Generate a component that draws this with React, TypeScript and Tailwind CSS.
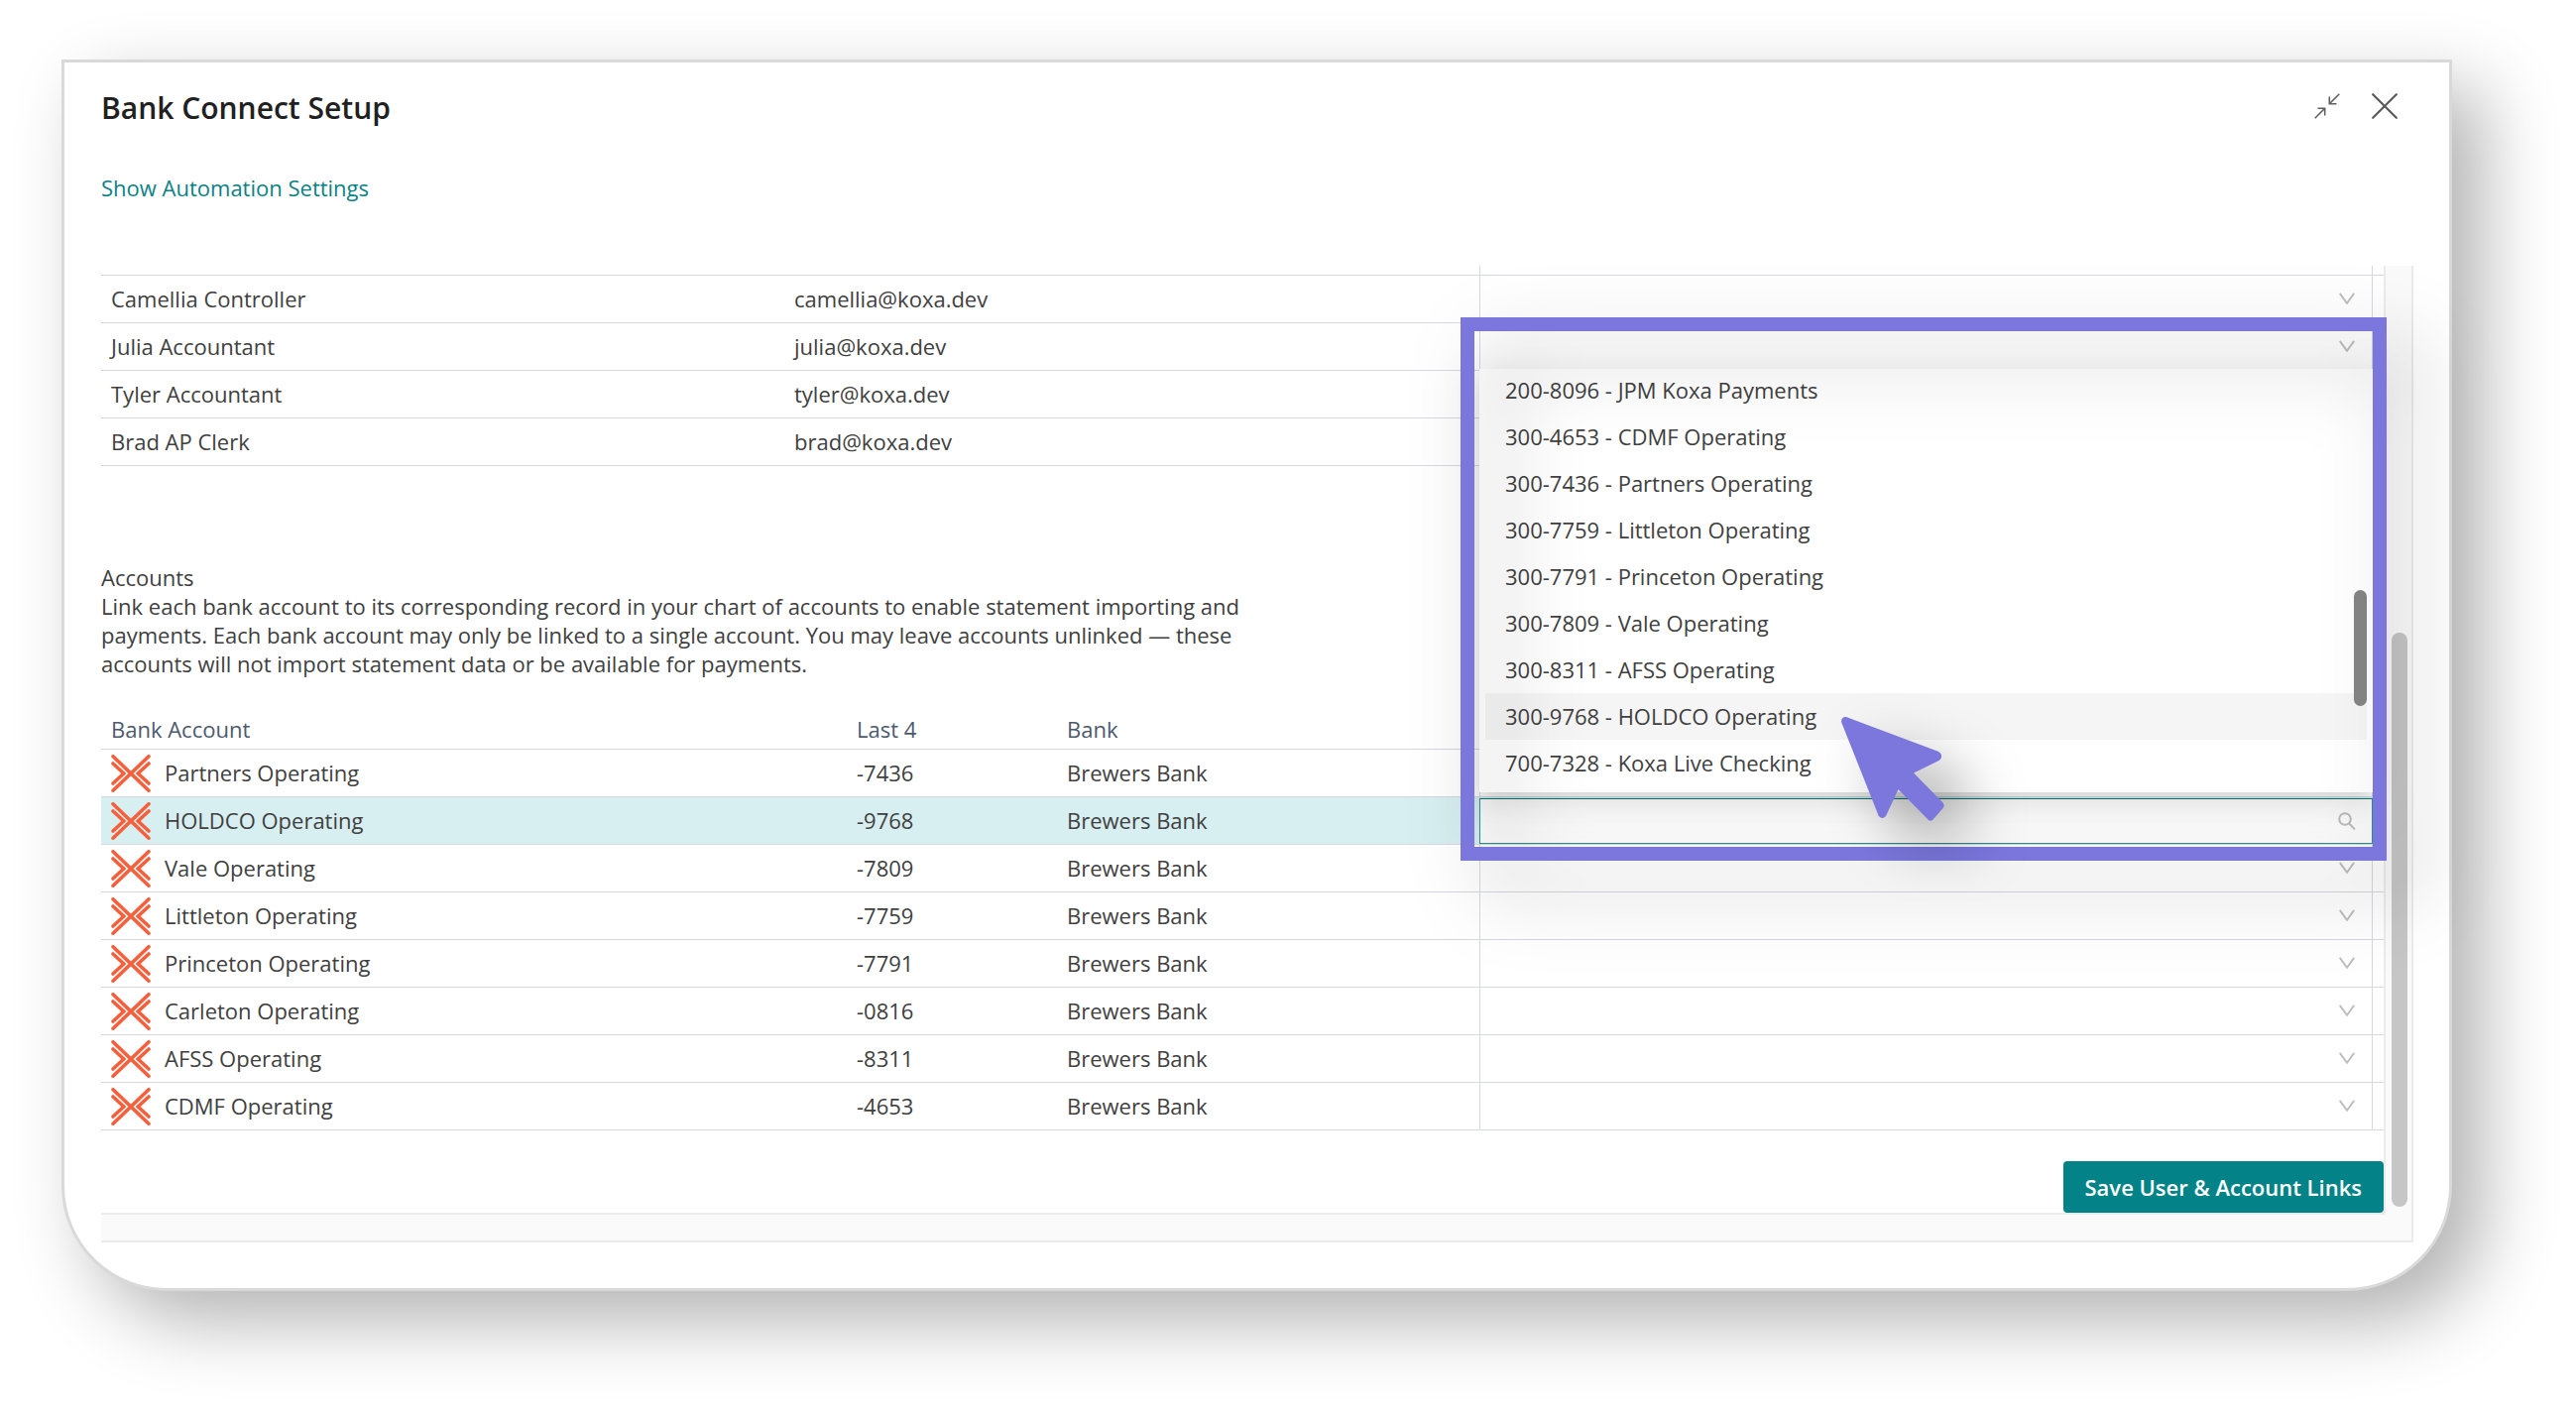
import clsx from 'clsx';

const users = [
    { name: 'Camellia Controller', email: 'camellia@koxa.dev' },
    { name: 'Julia Accountant', email: 'julia@koxa.dev' },
    { name: 'Tyler Accountant', email: 'tyler@koxa.dev' },
    { name: 'Brad AP Clerk', email: 'brad@koxa.dev' },
];

const accounts = [
    { name: 'Partners Operating', last4: '-7436' },
    { name: 'HOLDCO Operating', last4: '-9768' },
    { name: 'Vale Operating', last4: '-7809' },
    { name: 'Littleton Operating', last4: '-7759' },
    { name: 'Princeton Operating', last4: '-7791' },
    { name: 'Carleton Operating', last4: '-0816' },
    { name: 'AFSS Operating', last4: '-8311' },
    { name: 'CDMF Operating', last4: '-4653' },
];

const options = [
    '200-8096 - JPM Koxa Payments',
    '300-4653 - CDMF Operating',
    '300-7436 - Partners Operating',
    '300-7759 - Littleton Operating',
    '300-7791 - Princeton Operating',
    '300-7809 - Vale Operating',
    '300-8311 - AFSS Operating',
    '300-9768 - HOLDCO Operating',
    '700-7328 - Koxa Live Checking',
];

const activeAccount = 'HOLDCO Operating';
const hoveredOption = '300-9768 - HOLDCO Operating';

const cell = 'h-12 border-b border-[#d5d8dc] p-0';

function BankLogo() {
    return (
        <svg viewBox="0 0 40 38" className="h-[38px] w-10 shrink-0" fill="none" stroke="#f55f3b" strokeWidth="3.6" strokeLinecap="round" aria-hidden="true">
            <path d="M2 1.8 38 36.2M38 1.8 2 36.2" />
            <path d="M2 9 12.8 19 2 29M38 9 27.2 19 38 29" />
        </svg>
    );
}

function SelectBox({ label }: { label: string }) {
    return (
        <div className="relative h-full">
            <select aria-label={label} className="block h-full w-full appearance-none bg-transparent px-4 outline-none" defaultValue="">
                <option value=""></option>
                {options.map((option) => <option key={option}>{option}</option>)}
            </select>
            <svg viewBox="0 0 16 12" className="pointer-events-none absolute top-[17px] right-[17px] h-3 w-4" fill="none" stroke="#bfbfbf" strokeWidth="2" aria-hidden="true">
                <path d="M.8.8 8 10.8 15.2.8" />
            </svg>
        </div>
    );
}

function AccountPicker() {
    return (
        <>
            <div className="absolute -inset-x-px top-px bottom-0 border border-[#2c9699] border-t-[#0a7d80] bg-white">
                <input aria-label="Search accounts" aria-expanded="true" role="combobox" className="block h-full w-full bg-transparent px-4 outline-none" />
                <svg viewBox="0 0 18 18" className="pointer-events-none absolute top-[13px] right-4 h-[18px] w-[18px]" fill="none" stroke="#bfbfbf" strokeWidth="2" aria-hidden="true">
                    <circle cx="7" cy="7" r="5.8" />
                    <path d="M11 11.2 17 17.4" />
                </svg>
            </div>

            <div className="absolute -inset-x-px bottom-[52px] z-10 h-[427px] bg-white shadow-[0_5px_10px_-7px_rgba(0,0,0,0.12),0_10px_26px_0_rgba(0,0,0,0.08),0_15px_46px_13px_rgba(0,0,0,0.05)]">
                <ul role="listbox" className="flex h-full flex-col justify-end overflow-hidden px-[6px] pb-[6px]">
                    {options.map((option) => (
                        <li
                            key={option}
                            role="option"
                            aria-selected={option === hoveredOption}
                            className={clsx('h-[47px] shrink-0 px-5 leading-[47px]', option === hoveredOption && 'bg-[#f5f5f5]')}
                        >
                            {option}
                        </li>
                    ))}
                </ul>
                <div className="absolute right-[6px] bottom-[87px] h-[117px] w-[13px] rounded-full bg-[#868686]" />
            </div>

            {/* highlight frame round the open picker */}
            <div className="pointer-events-none absolute -top-[484px] -right-[15px] -bottom-[17px] -left-[20px] z-20 border-[14px] border-[#7b77dd] drop-shadow-[30px_30px_37px_rgba(0,0,0,0.3)]" />

            <svg viewBox="0 0 108 108" className="pointer-events-none absolute -top-[83px] left-[362px] z-30 h-[108px] w-[108px] overflow-visible drop-shadow-[30px_30px_30px_rgba(0,0,0,0.35)]" fill="#7b77dd" aria-hidden="true">
                <path d="M2.4 8C1.2 4 4 .8 8.2 2.4L99 36.5C104 38.5 104.3 43 100.5 46L75 58.5 104.5 88.5Q106.5 91 105 93.5L94.5 105.5Q92 108 89.5 105.5L59.5 75 47 102Q43.5 106 39.8 102Z" />
            </svg>
        </>
    );
}

function UsersTable() {
    return (
        <table className="w-full table-fixed border-separate border-spacing-0 text-left">
            <colgroup>
                <col />
                <col className="w-[701px]" />
                <col className="w-[901px]" />
                <col className="w-[11px]" />
            </colgroup>
            <tbody>
                <tr>
                    <td className="h-[10px] border-b border-[#d5d8dc] p-0" />
                    <td className="border-b border-[#d5d8dc] p-0" />
                    <td className="border-x border-b border-[#d5d8dc] p-0" />
                    <td className="border-b border-[#d5d8dc] p-0" />
                </tr>
                {users.map((user) => (
                    <tr key={user.email}>
                        <td className={clsx(cell, 'pl-[10px]')}>{user.name}</td>
                        <td className={clsx(cell, 'pl-[10px]')}>{user.email}</td>
                        <td className={clsx(cell, 'border-x')}>
                            <SelectBox label={`Account for ${user.name}`} />
                        </td>
                        <td className={cell} />
                    </tr>
                ))}
            </tbody>
        </table>
    );
}

function AccountsTable() {
    return (
        <table className="mt-[37px] w-full table-fixed border-separate border-spacing-0 text-left">
            <colgroup>
                <col />
                <col className="w-[212px]" />
                <col className="w-[426px]" />
                <col className="w-[901px]" />
                <col className="w-[11px]" />
            </colgroup>
            <thead>
                <tr className="text-[#4c5a6e]">
                    <th className="border-b border-[#d5d8dc] p-0 pb-[5px] pl-[10px] font-normal">Bank Account</th>
                    <th className="border-b border-[#d5d8dc] p-0 pb-[5px] pl-[10px] font-normal">Last 4</th>
                    <th className="border-b border-[#d5d8dc] p-0 pb-[5px] pl-[10px] font-normal">Bank</th>
                    <td className="border-b border-[#d5d8dc]" />
                    <td className="border-b border-[#d5d8dc]" />
                </tr>
            </thead>
            <tbody>
                {accounts.map((account) => {
                    const active = account.name === activeAccount;
                    return (
                        <tr key={account.name} className={clsx(active && 'bg-[#d8eff1]')}>
                            <td className={clsx(cell, 'pl-[10px]')}>
                                <div className="flex items-center gap-[14px]">
                                    <BankLogo />
                                    {account.name}
                                </div>
                            </td>
                            <td className={clsx(cell, 'pl-[10px]')}>{account.last4}</td>
                            <td className={clsx(cell, 'pl-[10px]')}>Brewers Bank</td>
                            <td className={clsx(cell, 'border-x', active && 'relative')}>
                                {active ? <AccountPicker /> : <SelectBox label={`Account for ${account.name}`} />}
                            </td>
                            <td className={cell} />
                        </tr>
                    );
                })}
            </tbody>
        </table>
    );
}

export default function App() {
    return (
        <div className="min-h-screen overflow-hidden bg-white pt-[60px] pr-[125px] pb-[129px] pl-[62px] font-['Open_Sans','Noto_Sans',sans-serif] text-[22px] leading-[29px] text-[#404040]">
            <section className="rounded-b-[106px] border-[3px] border-[#d9d9d9] bg-white pt-[26px] pr-9 pb-[46px] pl-[37px] shadow-[30px_30px_75px_rgba(0,0,0,0.3)]">
                <header className="flex items-start justify-between pr-4">
                    <h1 className="text-[30px] leading-10 font-semibold text-[#212121]">Bank Connect Setup</h1>
                    <div className="flex items-center gap-8 pt-[5px]">
                        <button type="button" aria-label="Collapse">
                            <svg viewBox="0 0 26 26" className="block h-[26px] w-[26px]" fill="none" stroke="#606060" strokeWidth="1.6" aria-hidden="true">
                                <path d="M25.3.7 15.3 10.7M15.3 3.5V10.7H22.5M.7 25.3 10.7 15.3M3.5 15.3H10.7V22.5" />
                            </svg>
                        </button>
                        <button type="button" aria-label="Close">
                            <svg viewBox="0 0 26 26" className="block h-[26px] w-[26px]" fill="none" stroke="#5a5a5a" strokeWidth="2.2" strokeLinecap="round" aria-hidden="true">
                                <path d="M1.2 1.2 24.8 24.8M24.8 1.2 1.2 24.8" />
                            </svg>
                        </button>
                    </div>
                </header>

                <a href="#automation" className="mt-[45px] block leading-[30px] text-[#0b8286]">Show Automation Settings</a>

                <div className="mt-16 border-r-2 border-b-2 border-[#ebebeb] bg-[#fafafa]">
                    <div className="flex">
                        <main className="min-w-0 flex-1 bg-white">
                            <UsersTable />

                            <h2 className="mt-[98px]">Accounts</h2>
                            <p className="max-w-[1160px]">
                                Link each bank account to its corresponding record in your chart of accounts to enable statement importing and payments. Each bank account may only be linked to a single account. You may leave accounts unlinked — these accounts will not import statement data or be available for payments.
                            </p>

                            <AccountsTable />

                            <div className="mt-[31px] flex justify-end border-b-2 border-[#ebebeb]">
                                <button type="button" className="h-[52px] rounded-[4px] bg-[#038387] px-[22px] font-semibold text-white">
                                    Save User &amp; Account Links
                                </button>
                            </div>
                        </main>
                        <div className="flex w-[28px] flex-col justify-end border-l-2 border-[#ebebeb] pb-[8px] pl-[6px]">
                            <div className="h-[61%] w-4 rounded-full bg-[#c6c6c6]" />
                        </div>
                    </div>
                    <div className="h-[26px]" />
                </div>
            </section>
        </div>
    );
}
